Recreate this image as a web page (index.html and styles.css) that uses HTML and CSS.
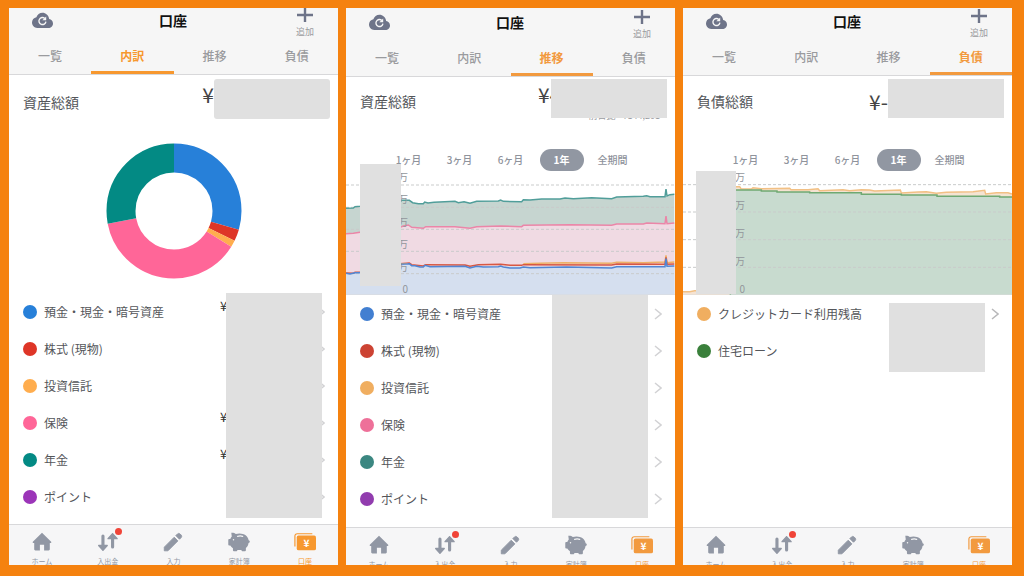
FILE: index.html
```html
<!DOCTYPE html>
<html lang="ja">
<head>
    <meta charset="UTF-8">
    <meta name="viewport" content="width=device-width, initial-scale=1.0">
    <title>口座</title>
    <link rel="stylesheet" href="styles.css">
</head>
<body>
    <!-- Shared icons -->
    <svg class="sprite" aria-hidden="true">
        <symbol id="icon-cloud" viewBox="0 0 24 24">
            <path fill="currentColor" d="M19.6 10.2C18.9 6 15.6 3.2 12 3.2c-3.400 0-6 2-7 5.200C2 9 0 11.400 0 14.400 0 17.800 2.600 20.600 6 20.600h12.800c2.900 0 5.200-2.400 5.200-5.300 0-2.600-1.900-4.700-4.400-5.100z"/>
            <path fill="none" stroke="#f6f6f6" stroke-width="1.600" d="M14.600 9.600a4 4 0 1 0 1.300 3.600"/>
            <path fill="#f6f6f6" d="M16.200 7.400v4.400h-4.400z"/>
        </symbol>
        <symbol id="icon-plus" viewBox="0 0 16 15">
            <path fill="none" stroke="currentColor" stroke-width="2.400" d="M8 0v14M0 7h16"/>
        </symbol>
        <symbol id="icon-home" viewBox="0 0 24 24">
            <path fill="currentColor" d="M12 2 22 11.800c.5.6.2 1.200-.5 1.200H20.500V20c0 .8-.5 1.300-1.300 1.300H14.300V15H9.700v6.300H4.800C4 21.300 3.500 20.800 3.500 20v-7H2.500c-.7 0-1-.6-.5-1.200z"/>
        </symbol>
        <symbol id="icon-arrows" viewBox="0 0 24 24">
            <path fill="none" stroke="currentColor" stroke-width="3.400" stroke-linecap="round" d="M6.500 5.500v12M17 17.500V6"/>
            <path fill="currentColor" stroke="currentColor" stroke-width="1.400" stroke-linejoin="round" d="M1.800 15.800h9.400l-4.700 5.400zM12 8.400h10L17 2.800z"/>
        </symbol>
        <symbol id="icon-pencil" viewBox="0 0 24 24">
            <path fill="currentColor" stroke="currentColor" stroke-linejoin="round" d="M2.500 17.600v4h4L17.300 10.800l-4-4zM20.900 7.200c.8-.8.8-2 0-2.800l-1.200-1.200c-.8-.8-2-.8-2.800 0l-1.800 1.800 4 4z"/>
        </symbol>
        <symbol id="icon-pig" viewBox="0 0 24 24">
            <path fill="currentColor" d="M3.600 1.900c2-.2 3.900.4 4.900 1.400 1.300-.4 2.600-.6 4-.6 5.400 0 9.300 3 10 7.300.8.200 1.300.8 1.300 1.500 0 .8-.5 1.400-1.400 1.500-.3 2.300-1.300 4.200-2.900 5.600v2.400c0 .6-.4 1-1 1h-2.800c-.6 0-1-.4-1-1v-.3c-1.500.2-3 .2-4.500 0v.3c0 .6-.4 1-1 1H6.400c-.6 0-1-.4-1-1v-2.200c-1.200-.8-2.200-1.800-2.900-3H1.300c-.6 0-1-.4-1-1V9.600c0-.6.4-1 1-1h1.200c.3-1 .8-1.900 1.600-2.700z"/>
            <path fill="none" stroke="#f6f6f7" stroke-width="1.400" stroke-linecap="round" d="M10.500 5.800c1.900-.5 3.700-.5 5.500 0"/>
            <circle cx="6" cy="9.600" r=".8" fill="#f6f6f7"/>
        </symbol>
        <symbol id="icon-wallet" viewBox="0 0 24 20">
            <path fill="none" stroke="currentColor" stroke-width="1.300" d="M1 15V3.500C1 2 2 1 3.500 1H20"/>
            <rect x="3" y="3" width="21" height="16" rx="2" fill="currentColor"/>
            <text x="13.500" y="15" text-anchor="middle" class="wallet-yen">¥</text>
        </symbol>
        <symbol id="icon-chevron" viewBox="0 0 8 12">
            <path fill="none" stroke="currentColor" stroke-width="1.500" d="M1 1l6 5-6 5"/>
        </symbol>
    </svg>

    <main class="screens">
        <!-- Breakdown -->
        <section class="screen">
            <header class="header">
                <div class="topbar">
                    <button class="icon-button" aria-label="更新"><svg class="icon-cloud"><use href="#icon-cloud"/></svg></button>
                    <h1 class="title">口座</h1>
                    <button class="add-button"><svg class="icon-plus"><use href="#icon-plus"/></svg>追加</button>
                </div>
                <nav class="tabs">
                    <a href="#" class="tab">一覧</a>
                    <a href="#" class="tab active">内訳</a>
                    <a href="#" class="tab">推移</a>
                    <a href="#" class="tab">負債</a>
                </nav>
            </header>
            <div class="summary">
                <span class="summary-label">資産総額</span>
                <span class="summary-amount">¥</span>
                <span class="summary-mask rounded"></span>
            </div>
            <div class="donut">
                <svg viewBox="0 0 136 136">
                    <g fill="none" stroke-width="29" transform="rotate(-90 68 68)">
                        <circle cx="68" cy="68" r="53" pathLength="100" stroke="#2780d9" stroke-dasharray="29.500 70.500"/>
                        <circle cx="68" cy="68" r="53" pathLength="100" stroke="#de3527" stroke-dasharray="2.800 97.200" stroke-dashoffset="-29.500"/>
                        <circle cx="68" cy="68" r="53" pathLength="100" stroke="#ffad4e" stroke-dasharray="1.600 98.400" stroke-dashoffset="-32.300"/>
                        <circle cx="68" cy="68" r="53" pathLength="100" stroke="#ff6698" stroke-dasharray="38.100 61.900" stroke-dashoffset="-33.900"/>
                        <circle cx="68" cy="68" r="53" pathLength="100" stroke="#038a84" stroke-dasharray="28 72" stroke-dashoffset="-72"/>
                    </g>
                </svg>
            </div>
            <div class="list-wrap">
                <ul class="list">
                    <li class="row"><span class="dot blue"></span>預金・現金・暗号資産<span class="row-amount">¥</span><svg class="chevron"><use href="#icon-chevron"/></svg></li>
                    <li class="row"><span class="dot red"></span>株式 (現物)<span class="row-amount"></span><svg class="chevron"><use href="#icon-chevron"/></svg></li>
                    <li class="row"><span class="dot orange"></span>投資信託<span class="row-amount"></span><svg class="chevron"><use href="#icon-chevron"/></svg></li>
                    <li class="row"><span class="dot pink"></span>保険<span class="row-amount">¥</span><svg class="chevron"><use href="#icon-chevron"/></svg></li>
                    <li class="row"><span class="dot teal"></span>年金<span class="row-amount">¥</span><svg class="chevron"><use href="#icon-chevron"/></svg></li>
                    <li class="row"><span class="dot purple"></span>ポイント<span class="row-amount"></span><svg class="chevron"><use href="#icon-chevron"/></svg></li>
                </ul>
                <div class="list-mask wide"></div>
            </div>
            <nav class="bottom-nav tall">
                <a href="#" class="nav-item"><svg class="nav-icon"><use href="#icon-home"/></svg>ホーム</a>
                <a href="#" class="nav-item"><span class="badge-wrap"><svg class="nav-icon"><use href="#icon-arrows"/></svg><span class="badge"></span></span>入出金</a>
                <a href="#" class="nav-item"><svg class="nav-icon"><use href="#icon-pencil"/></svg>入力</a>
                <a href="#" class="nav-item"><svg class="nav-icon"><use href="#icon-pig"/></svg>家計簿</a>
                <a href="#" class="nav-item active"><svg class="nav-icon"><use href="#icon-wallet"/></svg>口座</a>
            </nav>
        </section>

        <!-- Trend -->
        <section class="screen trend">
            <header class="header">
                <div class="topbar">
                    <button class="icon-button" aria-label="更新"><svg class="icon-cloud"><use href="#icon-cloud"/></svg></button>
                    <h1 class="title">口座</h1>
                    <button class="add-button"><svg class="icon-plus"><use href="#icon-plus"/></svg>追加</button>
                </div>
                <nav class="tabs">
                    <a href="#" class="tab">一覧</a>
                    <a href="#" class="tab">内訳</a>
                    <a href="#" class="tab active">推移</a>
                    <a href="#" class="tab">負債</a>
                </nav>
            </header>
            <div class="summary">
                <span class="summary-label">資産総額</span>
                <span class="summary-amount clipped">¥4</span>
                <span class="summary-mask"></span>
                <span class="summary-diff">前日比 +¥144,201</span>
            </div>
            <div class="ranges">
                <button class="range">1ヶ月</button>
                <button class="range">3ヶ月</button>
                <button class="range">6ヶ月</button>
                <button class="range active">1年</button>
                <button class="range">全期間</button>
            </div>
            <div class="chart">
                <svg class="plot" viewBox="18 93 987 372" preserveAspectRatio="none">
                    <path fill="#c6d5d0" d="M18 205L40 204 45 200 60 199 120 190 180 186 185 181H208L218 188 235 191 250 191 254 186 264 189 282 187 345 184 355 188 372 185 390 190 410 184 475 183 482 180 490 184 545 185 550 179 570 180 605 177 660 177 675 174 700 176 755 173 815 176 830 171 910 169 920 167 930 170 985 168 990 164 1003 163V465H18z"/>
                    <path fill="#f0dae3" d="M18 281L40 280 60 277 180 262 190 258 205 255 215 262 250 265 257 260 345 260 390 265 410 260 482 258 545 260 550 256 690 254 815 256 830 252 910 252 920 249 1003 249V465H18z"/>
                    <path fill="#d5dfef" d="M18 400L40 400 45 397 180 372 208 371 215 377 250 380 257 376 545 379 550 380 1003 379V465H18z"/>
                    <path class="grid-line" d="M18 135H1005M18 202H1005M18 268H1005M18 334H1005M18 401H1005"/>
                    <g class="line">
                        <path stroke="#519e9a" d="M18 205L40 204 45 200 60 199 120 190 180 186 185 181H208L218 188 235 191 250 191 254 186 264 189 282 187 345 184 355 188 372 185 390 190 410 184 475 183 482 180 490 184 545 185 550 179 570 180 605 177 660 177 675 174 700 176 755 173 815 176 830 171 910 169 920 167 930 170 975 170 978 147 981 168 990 164 1003 163"/>
                        <path stroke="#eb86a8" d="M18 281L40 280 60 277 180 262 190 258 205 255 215 262 250 265 257 260 345 260 390 265 410 260 482 258 545 260 550 256 690 254 815 256 830 252 910 252 920 249 975 251 978 228 981 251 1003 249"/>
                        <path stroke="#eeb066" d="M550 371L600 370 670 368 815 370 830 367 910 368 975 366 978 346 981 368 1003 366"/>
                        <path stroke="#d85742" d="M18 399L40 400 45 397 60 397 180 371 208 369 215 374 250 378 257 374 375 375 390 379 415 374 482 373 510 376 545 376 550 374 815 375 830 372 975 373 978 352 981 373 1003 372"/>
                        <path stroke="#5285d2" d="M18 400L30 402 45 398 60 398 180 373 208 371 215 377 225 377 240 381 250 381 255 376 270 380 375 379 390 384 410 379 430 381 475 380 482 378 490 381 510 384 540 384 550 381 570 383 680 381 815 384 830 380 975 380 978 356 981 379 1003 378"/>
                    </g>
                    <path class="base-line" d="M18 465H1005"/>
                </svg>
                <div class="axis">
                    <span>万</span><span>万</span><span>万</span><span>万</span><span>万</span><span>0</span>
                </div>
                <div class="chart-mask"></div>
            </div>
            <div class="list-wrap">
                <ul class="list">
                    <li class="row"><span class="dot blue"></span>預金・現金・暗号資産<span class="row-amount"></span><svg class="chevron"><use href="#icon-chevron"/></svg></li>
                    <li class="row"><span class="dot red"></span>株式 (現物)<span class="row-amount"></span><svg class="chevron"><use href="#icon-chevron"/></svg></li>
                    <li class="row"><span class="dot orange"></span>投資信託<span class="row-amount"></span><svg class="chevron"><use href="#icon-chevron"/></svg></li>
                    <li class="row"><span class="dot pink"></span>保険<span class="row-amount"></span><svg class="chevron"><use href="#icon-chevron"/></svg></li>
                    <li class="row"><span class="dot teal"></span>年金<span class="row-amount"></span><svg class="chevron"><use href="#icon-chevron"/></svg></li>
                    <li class="row"><span class="dot purple"></span>ポイント<span class="row-amount"></span><svg class="chevron"><use href="#icon-chevron"/></svg></li>
                </ul>
                <div class="list-mask"></div>
            </div>
            <nav class="bottom-nav">
                <a href="#" class="nav-item"><svg class="nav-icon"><use href="#icon-home"/></svg>ホーム</a>
                <a href="#" class="nav-item"><span class="badge-wrap"><svg class="nav-icon"><use href="#icon-arrows"/></svg><span class="badge"></span></span>入出金</a>
                <a href="#" class="nav-item"><svg class="nav-icon"><use href="#icon-pencil"/></svg>入力</a>
                <a href="#" class="nav-item"><svg class="nav-icon"><use href="#icon-pig"/></svg>家計簿</a>
                <a href="#" class="nav-item active"><svg class="nav-icon"><use href="#icon-wallet"/></svg>口座</a>
            </nav>
        </section>

        <!-- Debt -->
        <section class="screen debt">
            <header class="header">
                <div class="topbar">
                    <button class="icon-button" aria-label="更新"><svg class="icon-cloud"><use href="#icon-cloud"/></svg></button>
                    <h1 class="title">口座</h1>
                    <button class="add-button"><svg class="icon-plus"><use href="#icon-plus"/></svg>追加</button>
                </div>
                <nav class="tabs">
                    <a href="#" class="tab">一覧</a>
                    <a href="#" class="tab">内訳</a>
                    <a href="#" class="tab">推移</a>
                    <a href="#" class="tab active">負債</a>
                </nav>
            </header>
            <div class="summary">
                <span class="summary-label">負債総額</span>
                <span class="summary-amount">¥-</span>
                <span class="summary-mask"></span>
            </div>
            <div class="ranges">
                <button class="range">1ヶ月</button>
                <button class="range">3ヶ月</button>
                <button class="range">6ヶ月</button>
                <button class="range active">1年</button>
                <button class="range">全期間</button>
            </div>
            <div class="chart">
                <svg class="plot" viewBox="10 93 987 372" preserveAspectRatio="none">
                    <path fill="#f5e3d2" d="M10 455H30L45 452 152 450V140H180L184 146 215 147 220 143 245 146 330 145 334 149 385 149 415 146 420 152 490 149 510 152 545 149 570 150 585 153 662 150 665 159 715 156 740 155 770 160 800 157 880 155 915 151 918 162 950 158 985 158 997 162V465H10z"/>
                    <path fill="#c8dbcf" d="M152 150H245V153H292V156H390V158H545V163H665V165H772V169H960V171H997V465H152z"/>
                    <path class="grid-line" d="M10 134H997M10 216H997M10 299H997M10 382H997"/>
                    <g class="line">
                        <path stroke="#f2c084" d="M10 455H30L45 452 150 450 152 140H180L184 146 215 147 220 143 245 146 330 145 334 149 385 149 415 146 420 152 490 149 510 152 545 149 570 150 585 153 662 150 665 159 715 156 740 155 770 160 800 157 880 155 915 151 918 162 950 158 985 158 997 162"/>
                        <path stroke="#6fa972" d="M152 465V150H245V153H292V156H390V158H545V163H665V165H772V169H960V171H997"/>
                    </g>
                    <path class="base-line" d="M10 465H997"/>
                </svg>
                <div class="axis">
                    <span>万</span><span>万</span><span>万</span><span>万</span><span>0</span>
                </div>
                <div class="chart-mask"></div>
            </div>
            <div class="list-wrap">
                <ul class="list">
                    <li class="row"><span class="dot orange"></span>クレジットカード利用残高<span class="row-amount"></span><svg class="chevron"><use href="#icon-chevron"/></svg></li>
                    <li class="row"><span class="dot green"></span>住宅ローン</li>
                </ul>
                <div class="list-mask short"></div>
            </div>
            <nav class="bottom-nav">
                <a href="#" class="nav-item"><svg class="nav-icon"><use href="#icon-home"/></svg>ホーム</a>
                <a href="#" class="nav-item"><span class="badge-wrap"><svg class="nav-icon"><use href="#icon-arrows"/></svg><span class="badge"></span></span>入出金</a>
                <a href="#" class="nav-item"><svg class="nav-icon"><use href="#icon-pencil"/></svg>入力</a>
                <a href="#" class="nav-item"><svg class="nav-icon"><use href="#icon-pig"/></svg>家計簿</a>
                <a href="#" class="nav-item active"><svg class="nav-icon"><use href="#icon-wallet"/></svg>口座</a>
            </nav>
        </section>
    </main>
</body>
</html>
```
FILE: styles.css
```css
:root {
    --frame: #f5820f;
    --accent: #f7982f;
    --bar: #f6f6f7;
    --mask: #e0e0e0;
    --border: #d8d8da;
    --text: #54565a;
    --muted: #9a9b9e;
    --icon: #6e7489;
    --nav: #9197a4;
    --blue: #2780d9;
    --red: #de3527;
    --orange: #ffad4e;
    --pink: #ff6698;
    --teal: #038a84;
    --purple: #9b35b8;
}

* {
    margin: 0;
    padding: 0;
    box-sizing: border-box;
}

body {
    font-family: "Noto Sans CJK JP", sans-serif;
    background: var(--frame);
    color: var(--text);
}

button {
    border: none;
    background: none;
    font-family: inherit;
    cursor: pointer;
}

a {
    text-decoration: none;
}

svg {
    display: block;
}

.sprite {
    position: absolute;
    width: 0;
    height: 0;
}

.screens {
    display: grid;
    grid-template-columns: repeat(3, 1fr);
    gap: 8px;
    min-height: 100vh;
    padding: 8px 12px 11px 9px;
}

.screen {
    display: flex;
    flex-direction: column;
    background: #fff;
    overflow: hidden;
}

/* Header */
.header {
    background: #f6f6f6;
    border-bottom: 1px solid var(--border);
}

.trend .header {
    padding-top: 2px;
}

.debt .header {
    padding-top: 1px;
}

.topbar {
    display: grid;
    grid-template-columns: 1fr auto 1fr;
    height: 33px;
    padding: 0 24px 0 23px;
}

.icon-button {
    justify-self: start;
    height: 24px;
    color: var(--icon);
}

.icon-cloud {
    width: 21px;
    height: 21px;
}

.title {
    font-size: 14px;
    font-weight: 700;
    line-height: 24px;
    color: #111;
}

.add-button {
    justify-self: end;
    display: flex;
    flex-direction: column;
    align-items: center;
    gap: 3px;
    height: 30px;
    font-size: 9px;
    line-height: 12px;
    color: var(--muted);
}

.icon-plus {
    width: 16px;
    height: 15px;
    color: var(--icon);
}

.tabs {
    display: grid;
    grid-template-columns: repeat(4, 1fr);
}

.tab {
    border-bottom: 3px solid transparent;
    font-size: 12px;
    font-weight: 500;
    line-height: 30px;
    text-align: center;
    color: var(--muted);
}

.tab.active {
    border-color: var(--accent);
    font-weight: 700;
    color: var(--accent);
}

/* Total */
.summary {
    position: relative;
    display: flex;
    height: 44px;
    padding: 4px 8px 0 14px;
}

.trend .summary {
    height: 41px;
    padding-top: 2px;
}

.debt .summary {
    height: 42px;
    padding-top: 3px;
}

.summary-label {
    align-self: flex-end;
    margin-right: auto;
    font-size: 14px;
    line-height: 34px;
}

.summary-amount {
    font-size: 21px;
    line-height: 30px;
    color: #444;
}

.summary-amount.clipped {
    width: 13px;
    overflow: hidden;
}

.debt .summary-amount {
    line-height: 44px;
}

.summary-mask {
    position: relative;
    z-index: 1;
    width: 116px;
    background: var(--mask);
}

.summary-mask.rounded {
    border-radius: 3px;
}

.summary-diff {
    position: absolute;
    right: 15px;
    bottom: -4px;
    font-size: 9px;
    line-height: 12px;
    color: var(--muted);
}

.donut {
    padding: 24px 0 14px;
}

.donut svg {
    width: 136px;
    height: 136px;
    margin: 0 auto;
}

/* Chart */
.ranges {
    display: flex;
    justify-content: center;
    gap: 7px;
    margin-top: 31px;
}

.range {
    width: 44px;
    border-radius: 11px;
    font-size: 10px;
    font-weight: 500;
    line-height: 22px;
    white-space: nowrap;
    color: #8f939c;
}

.range.active {
    background: #9197a2;
    font-weight: 700;
    color: #fff;
}

.chart {
    position: relative;
}

.plot {
    width: 100%;
    height: 124px;
}

.plot path {
    vector-effect: non-scaling-stroke;
}

.line path {
    fill: none;
    stroke-width: 1.5px;
}

.grid-line {
    stroke: #c9cbcb;
    stroke-dasharray: 3 2;
}

.base-line {
    stroke: #dadada;
}

.axis {
    position: absolute;
    top: -1px;
    bottom: -1px;
    left: 0;
    display: flex;
    flex-direction: column;
    justify-content: space-between;
    width: 62px;
    font-size: 10px;
    line-height: 14px;
    text-align: right;
    color: #92969b;
}

.chart-mask {
    position: absolute;
    top: -7px;
    bottom: 9px;
    left: 14px;
    width: 41px;
    background: var(--mask);
}

.debt .chart-mask {
    top: 0;
    bottom: 1px;
    left: 13px;
    width: 40px;
}

/* Accounts */
.list-wrap {
    position: relative;
}

.list {
    list-style: none;
    padding: 0 13px 0 14px;
}

.row {
    display: flex;
    align-items: center;
    height: 37px;
    font-size: 12px;
}

.dot {
    width: 14px;
    height: 14px;
    margin-right: 7px;
    border-radius: 50%;
}

.blue { background: var(--blue); }
.red { background: var(--red); }
.orange { background: var(--orange); }
.pink { background: var(--pink); }
.teal { background: var(--teal); }
.purple { background: var(--purple); }
.green { background: #3a803b; }

.trend,
.debt {
    --accent: #f29a3f;
    --blue: #427fd1;
    --red: #cc4333;
    --orange: #f0ae60;
    --pink: #ee7099;
    --teal: #3b8781;
    --purple: #913cae;
}

.row-amount {
    align-self: flex-start;
    width: 97px;
    margin-left: auto;
    font-size: 13px;
    line-height: 26px;
    color: #333;
}

.chevron {
    width: 8px;
    height: 12px;
    color: #d2d2d4;
}

.debt .chevron {
    color: #b8b8ba;
}

.list-mask {
    position: absolute;
    top: 0;
    right: 27px;
    bottom: -1px;
    width: 96px;
    background: var(--mask);
}

.list-mask.wide {
    right: 16px;
    bottom: -3px;
}

.list-mask.short {
    top: 8px;
    bottom: -3px;
}

/* Bottom navigation */
.bottom-nav {
    display: grid;
    grid-template-columns: repeat(5, 1fr);
    height: 38px;
    margin-top: auto;
    padding-top: 6px;
    border-top: 1px solid var(--border);
    background: var(--bar);
    overflow: hidden;
}

.bottom-nav.tall {
    height: 41px;
}

.nav-item {
    display: flex;
    flex-direction: column;
    align-items: center;
    gap: 3px;
    font-size: 7px;
    line-height: 10px;
    color: var(--nav);
}

.nav-item.active {
    color: var(--accent);
}

.nav-icon {
    width: 22px;
    height: 22px;
}

.badge-wrap {
    position: relative;
}

.badge {
    position: absolute;
    top: -3px;
    right: -3px;
    width: 7px;
    height: 7px;
    border-radius: 50%;
    background: #f04438;
}

.wallet-yen {
    font-size: 11px;
    font-weight: 700;
    fill: #fff;
}
```
